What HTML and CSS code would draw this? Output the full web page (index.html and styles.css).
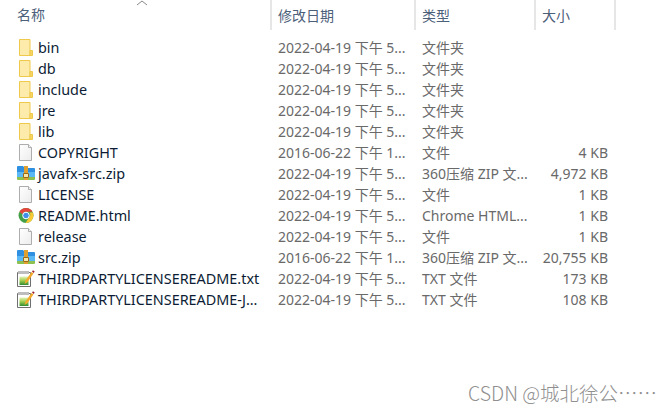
FILE: index.html
```html
<!DOCTYPE html>
<html lang="zh-CN">
<head>
  <meta charset="UTF-8" />
  <title>jdk</title>
  <link rel="stylesheet" href="styles.css">
</head>
<body>
  <svg class="defs" width="0" height="0">
    <defs>
      <linearGradient id="txtGreen" x1="0" y1="0" x2="0" y2="1">
        <stop offset="0" stop-color="#e4f2b8"/>
        <stop offset="0.5" stop-color="#9ccc4a"/>
        <stop offset="1" stop-color="#2f8a34"/>
      </linearGradient>
      <linearGradient id="docFill" x1="0" y1="0" x2="1" y2="1">
        <stop offset="0" stop-color="#ffffff"/>
        <stop offset="1" stop-color="#ececec"/>
      </linearGradient>
      <symbol id="folder" viewBox="0 0 18 17">
        <path d="M2.500 .5h10.500v16h-10.500z" fill="#fcebaa" stroke="#efc94c"/>
        <path d="M13 11.500h2.500v5h-2.500z" fill="#f6d565" stroke="#efc94c"/>
      </symbol>
      <symbol id="doc" viewBox="0 0 18 17">
        <path d="M2.500 .5h9l3 3v13h-12z" fill="url(#docFill)" stroke="#adadad"/>
        <path d="M11.500 .5v3h3" fill="#f4f4f4" stroke="#adadad"/>
      </symbol>
      <symbol id="zip" viewBox="0 0 18 17">
        <path d="M0 2q0-1 1-1h5l2 2h9q1 0 1 1v4h-18z" fill="#2f8fe0"/>
        <path d="M0 7h18v6h-18z" fill="#5ab8f5"/>
        <path d="M0 12h18v2q0 1-1 1h-16q-1 0-1-1z" fill="#8cc152"/>
        <path d="M7 1h4v14h-4z" fill="#e0a030"/>
        <path d="M6.500 8.500h5v4h-5z" fill="#f8e8a8" stroke="#9a6a1c"/>
      </symbol>
      <symbol id="chrome" viewBox="0 0 18 17">
        <circle cx="9" cy="8.500" r="7.500" fill="#43a047"/>
        <path d="M2.500 4.800a7.500 7.500 0 0 1 13 0h-6.500a3.700 3.700 0 0 0-3.500 2.400z" fill="#e5453a"/>
        <path d="M15.800 5.500a7.500 7.500 0 0 1-7.300 10.500l3.600-5.600a3.700 3.700 0 0 0 .3-4.900z" fill="#fbc934"/>
        <circle cx="9" cy="8.500" r="3.300" fill="#3f8fe8" stroke="#fff"/>
      </symbol>
      <symbol id="txt" viewBox="0 0 18 17">
        <path d="M.5 2.500h13v14h-13z" fill="#fff" stroke="#6e6e6e"/>
        <path d="M1 1h11v3h-11z" fill="#bdbdbd"/>
        <path d="M2.500 6.500h9v8.500h-9z" fill="url(#txtGreen)"/>
        <path d="M8.500 10.500l6-8.500 2 1.500-6 8.500-3 2z" fill="#f3aa2c"/>
        <path d="M15 1.500l1-1.200 1.700 1.300-1 1.400z" fill="#9c2230"/>
      </symbol>
    </defs>
  </svg>

  <div class="header">
    <svg class="sort" width="12" height="6" viewBox="0 0 12 6"><path d="M1 5l5-4 5 4" fill="none" stroke="#8a8a8a"/></svg>
    <div class="col-name head">名称</div>
    <div class="col-date head">修改日期</div>
    <div class="col-type head">类型</div>
    <div class="col-size head">大小</div>
  </div>

  <div class="list">
    <div class="row"><div class="col-name"><svg class="icon"><use href="#folder"/></svg>bin</div><div class="col-date">2022-04-19 下午 5...</div><div class="col-type">文件夹</div><div class="col-size"></div></div>
    <div class="row"><div class="col-name"><svg class="icon"><use href="#folder"/></svg>db</div><div class="col-date">2022-04-19 下午 5...</div><div class="col-type">文件夹</div><div class="col-size"></div></div>
    <div class="row"><div class="col-name"><svg class="icon"><use href="#folder"/></svg>include</div><div class="col-date">2022-04-19 下午 5...</div><div class="col-type">文件夹</div><div class="col-size"></div></div>
    <div class="row"><div class="col-name"><svg class="icon"><use href="#folder"/></svg>jre</div><div class="col-date">2022-04-19 下午 5...</div><div class="col-type">文件夹</div><div class="col-size"></div></div>
    <div class="row"><div class="col-name"><svg class="icon"><use href="#folder"/></svg>lib</div><div class="col-date">2022-04-19 下午 5...</div><div class="col-type">文件夹</div><div class="col-size"></div></div>
    <div class="row"><div class="col-name"><svg class="icon"><use href="#doc"/></svg>COPYRIGHT</div><div class="col-date">2016-06-22 下午 1...</div><div class="col-type">文件</div><div class="col-size">4 KB</div></div>
    <div class="row"><div class="col-name"><svg class="icon"><use href="#zip"/></svg>javafx-src.zip</div><div class="col-date">2022-04-19 下午 5...</div><div class="col-type">360压缩 ZIP 文...</div><div class="col-size">4,972 KB</div></div>
    <div class="row"><div class="col-name"><svg class="icon"><use href="#doc"/></svg>LICENSE</div><div class="col-date">2022-04-19 下午 5...</div><div class="col-type">文件</div><div class="col-size">1 KB</div></div>
    <div class="row"><div class="col-name"><svg class="icon"><use href="#chrome"/></svg>README.html</div><div class="col-date">2022-04-19 下午 5...</div><div class="col-type">Chrome HTML...</div><div class="col-size">1 KB</div></div>
    <div class="row"><div class="col-name"><svg class="icon"><use href="#doc"/></svg>release</div><div class="col-date">2022-04-19 下午 5...</div><div class="col-type">文件</div><div class="col-size">1 KB</div></div>
    <div class="row"><div class="col-name"><svg class="icon"><use href="#zip"/></svg>src.zip</div><div class="col-date">2016-06-22 下午 1...</div><div class="col-type">360压缩 ZIP 文...</div><div class="col-size">20,755 KB</div></div>
    <div class="row"><div class="col-name"><svg class="icon"><use href="#txt"/></svg>THIRDPARTYLICENSEREADME.txt</div><div class="col-date">2022-04-19 下午 5...</div><div class="col-type">TXT 文件</div><div class="col-size">173 KB</div></div>
    <div class="row"><div class="col-name"><svg class="icon"><use href="#txt"/></svg>THIRDPARTYLICENSEREADME-J...</div><div class="col-date">2022-04-19 下午 5...</div><div class="col-type">TXT 文件</div><div class="col-size">108 KB</div></div>
  </div>

  <div class="watermark">CSDN @城北徐公……</div>
</body>
</html>
```

FILE: styles.css
```css
body {
  margin: 0;
  background: #fff;
  font-family: "Noto Sans", "Noto Sans CJK SC", sans-serif;
  font-size: 14px;
  overflow: hidden;
}
.defs {
  display: block;
  width: 0;
  height: 0;
}
.header {
  display: flex;
  height: 30px;
  margin-bottom: 7px;
  position: relative;
}
.sort {
  position: absolute;
  left: 136px;
  top: 0;
}
.head {
  color: #4c607a;
  line-height: 32px;
  border-right: 2px solid #e6e6e6;
  box-sizing: border-box;
}
.row {
  display: flex;
  height: 21px;
  line-height: 21px;
  color: #696969;
  white-space: nowrap;
}
.col-name {
  width: 272px;
  flex: none;
  box-sizing: border-box;
  padding-left: 17px;
  display: flex;
  align-items: center;
  font-size: 14.4px;
  color: #0c1c34;
}
.col-name.head {
  font-size: 14px;
  color: #4c607a;
}
.col-date {
  width: 144px;
  flex: none;
  box-sizing: border-box;
  padding-left: 6px;
}
.col-type {
  width: 120px;
  flex: none;
  box-sizing: border-box;
  padding-left: 6px;
}
.col-size {
  width: 80px;
  flex: none;
  box-sizing: border-box;
  padding-left: 6px;
}
.row .col-size {
  text-align: right;
  padding-right: 8px;
}
.icon {
  width: 18px;
  height: 17px;
  flex: none;
  margin-right: 3px;
}
.watermark {
  position: absolute;
  right: 15px;
  bottom: 6px;
  font-family: "Noto Sans CJK SC", sans-serif;
  font-size: 19.5px;
  font-weight: 300;
  color: #8f8f8f;
}
```
